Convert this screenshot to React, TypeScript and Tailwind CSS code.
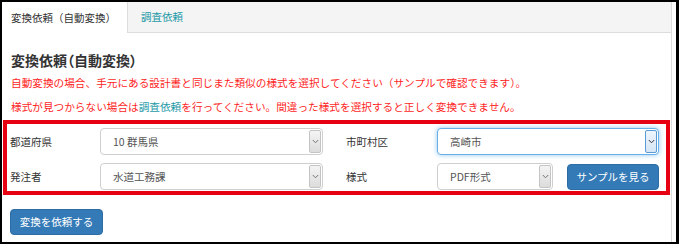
import React from "react";

function Chevron({ color = "#666" }: { color?: string }) {
  return (
    <svg width="7" height="5" viewBox="0 0 7 5" fill="none">
      <path d="M0.8 1 L3.5 3.8 L6.2 1" stroke={color} strokeWidth="1" />
    </svg>
  );
}

function Select({
  value,
  width,
  focused = false,
}: {
  value: string;
  width: string;
  focused?: boolean;
}) {
  return (
    <div
      className={
        "flex h-[27px] items-stretch rounded-[4px] border bg-white " +
        width +
        (focused
          ? " border-[#66afe9] shadow-[0_0_5px_rgba(102,175,233,0.7)]"
          : " border-[#cfcfcf]")
      }
    >
      <div className="flex flex-1 items-center pl-[12px] text-[10.5px] text-[#555]">
        {value}
      </div>
      <div
        className={
          "my-[1px] mr-[1px] flex w-[12px] items-center justify-center rounded-[2px] border bg-gradient-to-b" +
          (focused
            ? " border-[#5b9bd5] from-[#eef5fc] to-[#d6e6f5]"
            : " border-[#c4c4c4] from-[#f4f4f4] to-[#dcdcdc]")
        }
      >
        <Chevron color={focused ? "#333" : "#777"} />
      </div>
    </div>
  );
}

export default function App() {
  return (
    <div className="h-[246px] w-[680px] bg-white font-['Noto_Sans_CJK_JP','Noto_Sans',sans-serif]">
      <div className="h-[244px] w-[679px] border-[2px] border-r-[3px] border-black bg-white">
        <div className="flex h-full">
          <div className="flex h-full w-[670px] flex-col border-r border-[#dddddd]">
            {/* tabs */}
            <div className="flex h-[31px] border-b border-[#dddddd] bg-[#f4f4f4]">
              <div className="mb-[-1px] flex w-[126px] items-center border-r border-[#dddddd] bg-white pl-[9px] text-[10.5px] text-[#333]">
                変換依頼（自動変換）
              </div>
              <div className="flex items-center pl-[13px] text-[10.5px] text-[#1f9aa8]">
                調査依頼
              </div>
            </div>
            {/* content */}
            <div className="flex flex-col pt-[17px]">
              <div className="h-[20px] pl-[9px] text-[14px] font-bold leading-[20px] text-[#333] [font-feature-settings:'palt']">
                変換依頼（自動変換）
              </div>
              <div className="mt-[1px] h-[24px] pl-[9px] text-[10.65px] leading-[24px] text-[#ff1f1f]">
                自動変換の場合、手元にある設計書と同じまた類似の様式を選択してください（サンプルで確認できます）。
              </div>
              <div className="h-[24px] pl-[9px] text-[10.65px] leading-[24px] text-[#ff1f1f]">
                様式が見つからない場合は<span className="text-[#1f9aa8]">調査依頼</span>
                を行ってください。間違った様式を選択すると正しく変換できません。
              </div>
              {/* red box */}
              <div className="ml-[1px] mt-[1px] flex h-[75px] w-[667px] flex-col gap-[8px] border-[4px] border-[#e60012] pt-[4px]">
                <div className="flex items-center">
                  <div className="w-[93px] pl-[3px] text-[10.5px] text-[#333]">都道府県</div>
                  <Select value="10 群馬県" width="w-[223px]" />
                  <div className="w-[114px] pl-[23px] text-[10.5px] text-[#333]">市町村区</div>
                  <Select value="高崎市" width="w-[222px]" focused />
                </div>
                <div className="flex items-center">
                  <div className="w-[93px] pl-[3px] text-[10.5px] text-[#333]">発注者</div>
                  <Select value="水道工務課" width="w-[223px]" />
                  <div className="w-[114px] pl-[23px] text-[10.5px] text-[#333]">様式</div>
                  <Select value="PDF形式" width="w-[116px]" />
                  <button className="ml-[14px] flex h-[26px] w-[92px] items-center justify-center rounded-[4px] border border-[#2e6da4] bg-[#337ab7] text-[10.5px] text-white">
                    サンプルを見る
                  </button>
                </div>
              </div>
              <div className="pl-[8px] pt-[14px]">
                <button className="flex h-[26px] w-[93px] items-center justify-center rounded-[4px] border border-[#2e6da4] bg-[#337ab7] text-[10.5px] text-white">
                  変換を依頼する
                </button>
              </div>
            </div>
          </div>
        </div>
      </div>
    </div>
  );
}
